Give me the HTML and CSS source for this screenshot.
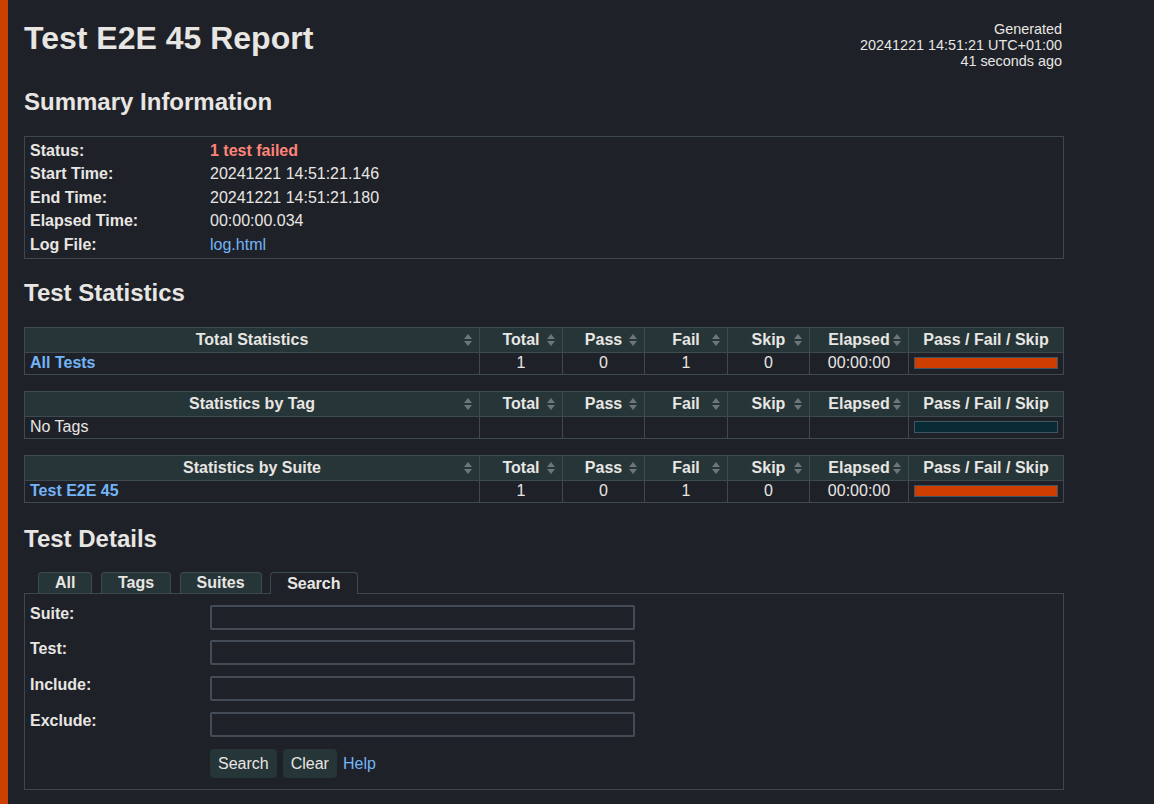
FILE: index.html
```html
<!DOCTYPE html>
<html>
<head>
<meta charset="utf-8">
<title>Test E2E 45 Report</title>
<link rel="stylesheet" href="styles.css">
</head>
<body>
<div class="page">
  <header class="header">
    <h1 class="title">Test E2E 45 Report</h1>
    <div class="generated">Generated<br>20241221 14:51:21 UTC+01:00<br>41 seconds ago</div>
  </header>

  <h2 class="section-title first">Summary Information</h2>
  <table class="summary">
    <tr><th>Status:</th><td class="fail-text">1 test failed</td></tr>
    <tr><th>Start Time:</th><td>20241221 14:51:21.146</td></tr>
    <tr><th>End Time:</th><td>20241221 14:51:21.180</td></tr>
    <tr><th>Elapsed Time:</th><td>00:00:00.034</td></tr>
    <tr><th>Log File:</th><td><a class="link" href="#">log.html</a></td></tr>
  </table>

  <h2 class="section-title">Test Statistics</h2>

  <table class="stats">
    <colgroup><col class="c-name"><col class="c-num"><col class="c-num2"><col class="c-num"><col class="c-num2"><col class="c-el"><col></colgroup>
    <tr class="stats-head">
      <th class="sortable">Total Statistics<span class="sort"></span></th>
      <th class="sortable">Total<span class="sort"></span></th>
      <th class="sortable">Pass<span class="sort"></span></th>
      <th class="sortable">Fail<span class="sort"></span></th>
      <th class="sortable">Skip<span class="sort"></span></th>
      <th class="sortable">Elapsed<span class="sort"></span></th>
      <th>Pass / Fail / Skip</th>
    </tr>
    <tr>
      <td class="name"><a class="link bold" href="#">All Tests</a></td>
      <td class="num">1</td><td class="num">0</td><td class="num">1</td><td class="num">0</td><td class="num">00:00:00</td>
      <td class="graph"><div class="bar bar-fail"></div></td>
    </tr>
  </table>

  <table class="stats">
    <colgroup><col class="c-name"><col class="c-num"><col class="c-num2"><col class="c-num"><col class="c-num2"><col class="c-el"><col></colgroup>
    <tr class="stats-head">
      <th class="sortable">Statistics by Tag<span class="sort"></span></th>
      <th class="sortable">Total<span class="sort"></span></th>
      <th class="sortable">Pass<span class="sort"></span></th>
      <th class="sortable">Fail<span class="sort"></span></th>
      <th class="sortable">Skip<span class="sort"></span></th>
      <th class="sortable">Elapsed<span class="sort"></span></th>
      <th>Pass / Fail / Skip</th>
    </tr>
    <tr>
      <td class="name">No Tags</td>
      <td class="num"></td><td class="num"></td><td class="num"></td><td class="num"></td><td class="num"></td>
      <td class="graph"><div class="bar bar-empty"></div></td>
    </tr>
  </table>

  <table class="stats">
    <colgroup><col class="c-name"><col class="c-num"><col class="c-num2"><col class="c-num"><col class="c-num2"><col class="c-el"><col></colgroup>
    <tr class="stats-head">
      <th class="sortable">Statistics by Suite<span class="sort"></span></th>
      <th class="sortable">Total<span class="sort"></span></th>
      <th class="sortable">Pass<span class="sort"></span></th>
      <th class="sortable">Fail<span class="sort"></span></th>
      <th class="sortable">Skip<span class="sort"></span></th>
      <th class="sortable">Elapsed<span class="sort"></span></th>
      <th>Pass / Fail / Skip</th>
    </tr>
    <tr>
      <td class="name"><a class="link bold" href="#">Test E2E 45</a></td>
      <td class="num">1</td><td class="num">0</td><td class="num">1</td><td class="num">0</td><td class="num">00:00:00</td>
      <td class="graph"><div class="bar bar-fail"></div></td>
    </tr>
  </table>

  <h2 class="section-title details-title">Test Details</h2>

  <div class="tabs">
    <div class="tab tab-all">All</div>
    <div class="tab">Tags</div>
    <div class="tab">Suites</div>
    <div class="tab tab-active">Search</div>
  </div>
  <div class="tab-content">
    <div class="search-form">
      <label class="field-label">Suite:</label><div class="field-box"><input class="field" type="text"></div>
      <label class="field-label">Test:</label><div class="field-box"><input class="field" type="text"></div>
      <label class="field-label">Include:</label><div class="field-box"><input class="field" type="text"></div>
      <label class="field-label">Exclude:</label><div class="field-box"><input class="field" type="text"></div>
      <div></div>
      <div class="buttons">
        <button class="btn" type="button">Search</button>
        <button class="btn" type="button">Clear</button>
        <a class="link" href="#">Help</a>
      </div>
    </div>
  </div>
</div>
</body>
</html>
```

FILE: styles.css
```css
html {
  background: #1e2128;
}
body {
  margin: 0;
  min-height: 804px;
  box-sizing: border-box;
  border-left: 8px solid #cc4000;
  padding: 0 16px;
  background: #1e2128;
  color: #e8e6e3;
  font-family: "Liberation Sans", Arial, Helvetica, sans-serif;
  font-size: 16px;
}
.page {
  width: 1040px;
}
.header {
  display: flex;
  justify-content: space-between;
  align-items: flex-start;
  padding-top: 20px;
}
.title {
  margin: 0;
  font-size: 32px;
  line-height: 36px;
  font-weight: bold;
}
.generated {
  margin-top: 1px;
  margin-right: 2px;
  text-align: right;
  font-size: 14.4px;
  line-height: 16px;
}
.section-title {
  margin: 20px 0 20px;
  font-size: 24px;
  line-height: 28px;
  font-weight: bold;
}
.section-title.first {
  margin-top: 19px;
}
.summary {
  width: 1040px;
  border: 1px solid #3d474e;
  border-spacing: 0;
  padding: 2px 0 1px;
}
.summary th,
.summary td {
  height: 23.5px;
  padding: 0 5px;
  text-align: left;
  vertical-align: middle;
  white-space: nowrap;
}
.summary th {
  width: 170px;
  font-weight: bold;
}
.fail-text {
  color: #ff8478;
  font-weight: bold;
}
.link {
  color: #73b4f6;
  text-decoration: none;
}
.bold {
  font-weight: bold;
}
.stats {
  width: 1040px;
  border-collapse: collapse;
  table-layout: fixed;
  margin-bottom: 16px;
}
.c-name { width: 455px; }
.c-num { width: 83px; }
.c-num2 { width: 82px; }
.c-el { width: 99px; }
.stats th,
.stats td {
  border: 1px solid #3d4a50;
  padding: 0 5px;
  white-space: nowrap;
}
.stats-head th {
  background: #263538;
  height: 24px;
  font-weight: bold;
  text-align: center;
  position: relative;
}
.stats td {
  height: 21px;
}
.stats td.num {
  text-align: center;
}
.sort {
  position: absolute;
  right: 6px;
  top: 50%;
  margin-top: -6px;
  width: 9px;
  height: 12px;
}
.sort::before,
.sort::after {
  content: "";
  position: absolute;
  left: 0;
  border-left: 4.5px solid transparent;
  border-right: 4.5px solid transparent;
}
.sort::before {
  top: 0;
  border-bottom: 5px solid #6c767b;
}
.sort::after {
  bottom: 0;
  border-top: 5px solid #6c767b;
}
.stats td.graph {
  padding: 0 5px;
}
.bar {
  height: 10px;
  border: 1px solid #3e5661;
}
.bar-fail {
  background: #ce3e01;
}
.bar-empty {
  background: #082a35;
}
.details-title {
  margin-top: 22px;
  margin-bottom: 19px;
}
.tabs {
  display: flex;
  gap: 8.5px;
  padding-left: 14px;
  align-items: flex-end;
  height: 21px;
}
.tab {
  box-sizing: border-box;
  height: 21px;
  padding: 0 16px;
  border: 1px solid #3d4a50;
  border-bottom: none;
  border-radius: 4px 4px 0 0;
  background: #263538;
  font-weight: bold;
  line-height: 20px;
}
.tab-all {
  min-width: 54px;
  text-align: center;
}
.tab-active {
  height: 22px;
  margin-bottom: -1px;
  background: #1e2128;
  position: relative;
  line-height: 22px;
}
.tab-content {
  box-sizing: border-box;
  border: 1px solid #3d474e;
  height: 197px;
  padding: 11px 5px 0;
}
.search-form {
  display: grid;
  grid-template-columns: 180px 425px;
}
.field-label {
  font-weight: bold;
  line-height: 18px;
}
.field-box {
  height: 35.7px;
}
.field {
  display: block;
  box-sizing: border-box;
  width: 425px;
  height: 25px;
  margin: 0;
  border: 2px solid #434c56;
  border-radius: 2px;
  background: #1e2128;
  color: #e8e6e3;
  outline: none;
}
.buttons {
  display: flex;
  align-items: center;
  gap: 6px;
  padding-top: 2px;
}
.btn {
  height: 29px;
  padding: 0 8px;
  border: none;
  border-radius: 4px;
  background: #263538;
  color: #e8e6e3;
  font-family: "Liberation Sans", Arial, Helvetica, sans-serif;
  font-size: 16px;
}
```
